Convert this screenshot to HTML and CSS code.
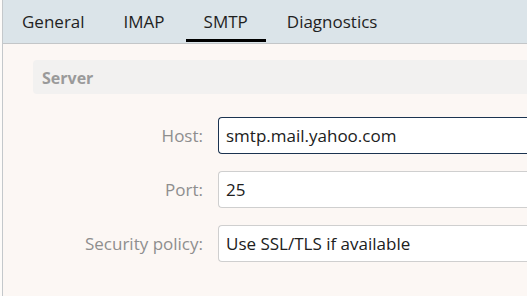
FILE: index.html
```html
<!DOCTYPE html>
<html>
<head>
<meta charset="utf-8">
<link rel="stylesheet" href="styles.css">
</head>
<body>
<div class="window">
  <nav class="tabs">
    <div class="tab">General</div>
    <div class="tab">IMAP</div>
    <div class="tab active">SMTP</div>
    <div class="tab">Diagnostics</div>
  </nav>
  <main class="panel">
    <div class="section-head">Server</div>
    <div class="form">
      <label class="label">Host:</label>
      <div class="input focused">smtp.mail.yahoo.com</div>
      <label class="label">Port:</label>
      <div class="input">25</div>
      <label class="label">Security policy:</label>
      <div class="input">Use SSL/TLS if available</div>
    </div>
  </main>
</div>
</body>
</html>
```
FILE: styles.css
```css
html, body {
  margin: 0;
  padding: 0;
  background: #fdfbf9;
}
body {
  font-family: "Open Sans", "Noto Sans", sans-serif;
  width: 527px;
  height: 296px;
  overflow: hidden;
}
.window {
  margin-left: 2px;
  border-left: 1px solid #c4c8cb;
  height: 296px;
  background: #fcf7f4;
  box-sizing: border-box;
}
.tabs {
  display: flex;
  height: 43px;
  background: #dbe4e9;
  border-bottom: 1px solid #c3c6c8;
  padding-left: 1px;
  gap: 3px;
}
.tab {
  font-size: 17px;
  color: #1f1f1f;
  padding: 10px 18px 0;
  box-sizing: border-box;
  height: 43px;
  position: relative;
}
.tab.active::after {
  content: "";
  position: absolute;
  left: 0;
  right: 0;
  bottom: 1px;
  height: 3px;
  background: #000;
}
.panel {
  padding: 16px 0 0 30px;
}
.section-head {
  height: 34px;
  background: #f2f1f0;
  border-radius: 4px 0 0 4px;
  font-weight: 700;
  font-size: 16px;
  color: #9a9a9a;
  padding-left: 9px;
  line-height: 37px;
  box-sizing: border-box;
}
.form {
  display: grid;
  grid-template-columns: 170px 320px;
  column-gap: 15px;
  row-gap: 17px;
  margin-top: 23px;
  align-items: center;
}
.label {
  text-align: right;
  font-size: 17px;
  color: #8e8e8e;
}
.input {
  height: 37px;
  box-sizing: border-box;
  border: 1px solid #cfcfcf;
  border-right: none;
  border-radius: 4px 0 0 4px;
  background: #fff;
  font-size: 17px;
  color: #202020;
  padding-left: 7px;
  line-height: 35px;
}
.input.focused {
  border: 1px solid #1b3350;
  border-right: none;
}
```
